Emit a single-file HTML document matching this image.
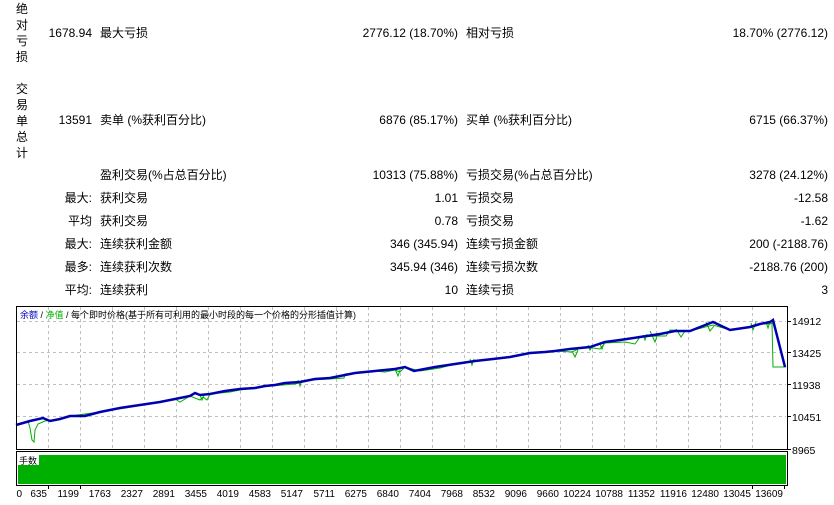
<!DOCTYPE html>
<html><head><meta charset="utf-8"><style>
*{margin:0;padding:0}
body{width:834px;height:505px;background:#fff;position:relative;overflow:hidden;font-family:"Liberation Sans","Noto Sans CJK SC",sans-serif;font-size:12px;color:#000}
.t{position:absolute;white-space:nowrap;line-height:14px}
.r{text-align:right}
.v{position:absolute;left:15px;width:14px;font-size:12px;line-height:16px;text-align:center}
</style></head><body>
<div class="v" style="top:1px">绝<br>对<br>亏<br>损</div>
<div class="v" style="top:81px">交<br>易<br>单<br>总<br>计</div>

<div class="t r" style="right:742px;top:26px">1678.94</div>
<div class="t" style="left:100px;top:26px">最大亏损</div>
<div class="t r" style="right:376px;top:26px">2776.12 (18.70%)</div>
<div class="t" style="left:466px;top:26px">相对亏损</div>
<div class="t r" style="right:6px;top:26px">18.70% (2776.12)</div>

<div class="t r" style="right:742px;top:113px">13591</div>
<div class="t" style="left:100px;top:113px">卖单 (%获利百分比)</div>
<div class="t r" style="right:376px;top:113px">6876 (85.17%)</div>
<div class="t" style="left:466px;top:113px">买单 (%获利百分比)</div>
<div class="t r" style="right:6px;top:113px">6715 (66.37%)</div>

<div class="t" style="left:100px;top:168px">盈利交易(%占总百分比)</div>
<div class="t r" style="right:376px;top:168px">10313 (75.88%)</div>
<div class="t" style="left:466px;top:168px">亏损交易(%占总百分比)</div>
<div class="t r" style="right:6px;top:168px">3278 (24.12%)</div>

<div class="t r" style="right:742px;top:191px">最大:</div>
<div class="t" style="left:100px;top:191px">获利交易</div>
<div class="t r" style="right:376px;top:191px">1.01</div>
<div class="t" style="left:466px;top:191px">亏损交易</div>
<div class="t r" style="right:6px;top:191px">-12.58</div>

<div class="t r" style="right:742px;top:214px">平均</div>
<div class="t" style="left:100px;top:214px">获利交易</div>
<div class="t r" style="right:376px;top:214px">0.78</div>
<div class="t" style="left:466px;top:214px">亏损交易</div>
<div class="t r" style="right:6px;top:214px">-1.62</div>

<div class="t r" style="right:742px;top:237px">最大:</div>
<div class="t" style="left:100px;top:237px">连续获利金额</div>
<div class="t r" style="right:376px;top:237px">346 (345.94)</div>
<div class="t" style="left:466px;top:237px">连续亏损金额</div>
<div class="t r" style="right:6px;top:237px">200 (-2188.76)</div>

<div class="t r" style="right:742px;top:260px">最多:</div>
<div class="t" style="left:100px;top:260px">连续获利次数</div>
<div class="t r" style="right:376px;top:260px">345.94 (346)</div>
<div class="t" style="left:466px;top:260px">连续亏损次数</div>
<div class="t r" style="right:6px;top:260px">-2188.76 (200)</div>

<div class="t r" style="right:742px;top:283px">平均:</div>
<div class="t" style="left:100px;top:283px">连续获利</div>
<div class="t r" style="right:376px;top:283px">10</div>
<div class="t" style="left:466px;top:283px">连续亏损</div>
<div class="t r" style="right:6px;top:283px">3</div>

<svg width="834" height="505" style="position:absolute;left:0;top:0" font-family="Liberation Sans, Noto Sans CJK SC, sans-serif">
<g stroke="#c0c0c0" stroke-dasharray="3,3" stroke-width="1">
<line x1="17" y1="321.5" x2="786" y2="321.5"/><line x1="17" y1="352.5" x2="786" y2="352.5"/><line x1="17" y1="384.5" x2="786" y2="384.5"/><line x1="17" y1="416.5" x2="786" y2="416.5"/>
<line x1="48.5" y1="307" x2="48.5" y2="449"/><line x1="80.5" y1="307" x2="80.5" y2="449"/><line x1="112.5" y1="307" x2="112.5" y2="449"/><line x1="144.5" y1="307" x2="144.5" y2="449"/><line x1="176.5" y1="307" x2="176.5" y2="449"/><line x1="208.5" y1="307" x2="208.5" y2="449"/><line x1="240.5" y1="307" x2="240.5" y2="449"/><line x1="272.5" y1="307" x2="272.5" y2="449"/><line x1="304.5" y1="307" x2="304.5" y2="449"/><line x1="336.5" y1="307" x2="336.5" y2="449"/><line x1="368.5" y1="307" x2="368.5" y2="449"/><line x1="400.5" y1="307" x2="400.5" y2="449"/><line x1="432.5" y1="307" x2="432.5" y2="449"/><line x1="464.5" y1="307" x2="464.5" y2="449"/><line x1="496.5" y1="307" x2="496.5" y2="449"/><line x1="528.5" y1="307" x2="528.5" y2="449"/><line x1="560.5" y1="307" x2="560.5" y2="449"/><line x1="592.5" y1="307" x2="592.5" y2="449"/><line x1="624.5" y1="307" x2="624.5" y2="449"/><line x1="656.5" y1="307" x2="656.5" y2="449"/><line x1="688.5" y1="307" x2="688.5" y2="449"/><line x1="720.5" y1="307" x2="720.5" y2="449"/><line x1="752.5" y1="307" x2="752.5" y2="449"/>
</g>
<polyline fill="none" stroke="#00b000" stroke-width="1" points="16,425 28,421 30,428 32,440 34,442 35,430 38,424 45,421 60,419 70,416 100,412 130,407 165,401 175,399 180,402 190,396 200,400 203,397 207,400 210,394 230,392 240,390 255,388 270,386 295,384 310,380 330,379 344,378 345,374 355,373 375,371 385,372 395,370 400,372 405,367 420,371 440,368 455,364 475,361 493,359 510,357 530,353 545,352 555,351 572,352 580,348 593,348 600,349 605,343 625,342 635,344 640,337 658,336 666,336 670,330 690,331 713,325 720,327 730,330 750,327 760,324 770,324 772,323 773,367 786,367"/>
<path fill="none" stroke="#00b000" stroke-width="1" d="M200,395 L202,400 L204,395 M298,380 L300,386 L302,380 M395,369 L398,376 L400,370 M470,359 L472,365 L474,359 M572,351 L575,357 L578,350 M588,345 L590,350 L592,346 M600,344 L602,349 L604,343 M643,335 L645,340 L647,334 M650,331 L655,342 L658,333 M676,329 L681,337 L685,331 M706,322 L710,331 L714,326 M751,323 L753,330 L756,322 M766,322 L768,328 L770,322"/>
<polyline fill="none" stroke="#0000b0" stroke-width="2.5" points="16,425 30,421 43,418 50,421 60,419 70,416 85,416 100,412 120,408 140,405 160,402 175,399 190,396 195,393 200,395 210,394 225,391 240,389 255,388 265,386 275,385 285,383 300,382 315,379 330,378 345,375 355,373 375,371 385,370 395,369 405,367 414,371 435,367 455,364 475,361 493,359 510,357 530,353 545,352 555,351 570,349 590,347 605,342 620,340 640,337 660,334 675,331 690,331 713,322 730,330 750,327 760,324 770,322 773,320 785,367"/>
<rect x="16.5" y="306.5" width="771" height="143" fill="none" stroke="#000"/>
<rect x="16.5" y="451.5" width="771" height="34" fill="none" stroke="#000"/>
<rect x="18" y="455" width="768" height="29" fill="#00b000"/>
<rect x="18" y="455" width="21" height="10" fill="#fff"/>
<text x="19" y="464" font-size="9">手数</text>
<text x="20" y="318" font-size="9"><tspan fill="#0000c0">余额</tspan> / <tspan fill="#00b000">净值</tspan> / 每个即时价格(基于所有可利用的最小时段的每一个价格的分形插值计算)</text>
<g stroke="#000"><line x1="788" y1="321.5" x2="791" y2="321.5"/><line x1="788" y1="352.5" x2="791" y2="352.5"/><line x1="788" y1="384.5" x2="791" y2="384.5"/><line x1="788" y1="416.5" x2="791" y2="416.5"/><line x1="788" y1="449.5" x2="791" y2="449.5"/></g>
<g font-size="10.5" fill="#000">
<text x="792" y="325">14912</text><text x="792" y="357">13425</text><text x="792" y="389">11938</text><text x="792" y="421">10451</text><text x="792" y="454">8965</text>
</g>
<g font-size="10" fill="#000" text-anchor="end">
<text x="22" y="497">0</text><text x="47" y="497">635</text><text x="79" y="497">1199</text><text x="111" y="497">1763</text><text x="143" y="497">2327</text><text x="175" y="497">2891</text><text x="207" y="497">3455</text><text x="239" y="497">4019</text><text x="271" y="497">4583</text><text x="303" y="497">5147</text><text x="335" y="497">5711</text><text x="367" y="497">6275</text><text x="399" y="497">6840</text><text x="431" y="497">7404</text><text x="463" y="497">7968</text><text x="495" y="497">8532</text><text x="527" y="497">9096</text><text x="559" y="497">9660</text><text x="591" y="497">10224</text><text x="623" y="497">10788</text><text x="655" y="497">11352</text><text x="687" y="497">11916</text><text x="719" y="497">12480</text><text x="751" y="497">13045</text><text x="783" y="497">13609</text>
</g>
<g stroke="#000"><line x1="48.5" y1="486" x2="48.5" y2="489"/><line x1="80.5" y1="486" x2="80.5" y2="489"/><line x1="752.5" y1="486" x2="752.5" y2="489"/><line x1="784.5" y1="486" x2="784.5" y2="489"/></g>
</svg>
</body></html>
